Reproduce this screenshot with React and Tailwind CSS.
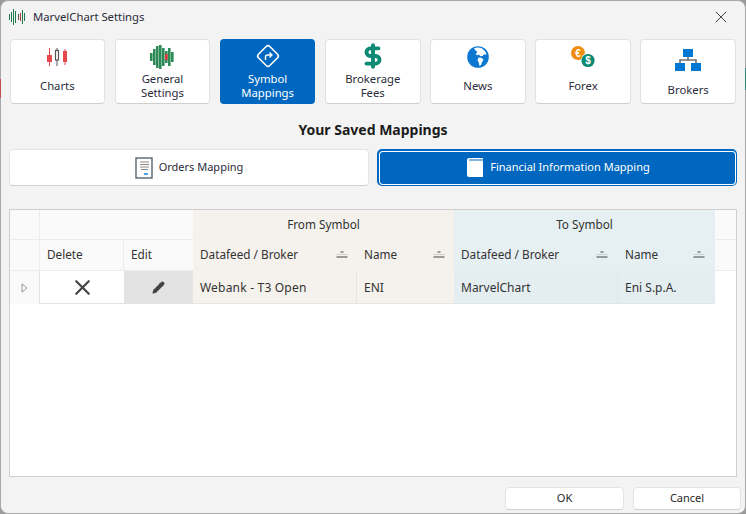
import { X, Pencil, DollarSign } from "lucide-react";

function ChartsIcon() {
  return (
    <svg width="20" height="18" viewBox="0 0 20 18">
      <path d="M2.500 0v18M18 1v16" stroke="#e5484d" strokeWidth="1" />
      <rect x="0" y="7" width="5" height="7" fill="#e5484d" />
      <rect x="16" y="3" width="4" height="11" fill="#e5484d" />
      <path d="M10 0v18" stroke="#555" strokeWidth="1" />
      <rect x="8.500" y="2.500" width="3" height="9.500" fill="#fff" stroke="#555" strokeWidth="1.2" />
    </svg>
  );
}

function WaveIcon() {
  const bars = [[0, 8, 8], [3, 4, 16], [6, 1, 22], [9, 0, 24], [12, 3, 18], [15, 6, 12], [18, 3, 18], [21, 7, 10]];
  return (
    <svg width="24" height="24" viewBox="0 0 24 24">
      {bars.map(([x, y, h]) => (
        <rect key={x} x={x} y={y} width="2.6" height={h} fill="#2e8b57" />
      ))}
      <rect x="15" y="9" width="2.6" height="6" fill="#d9363e" />
    </svg>
  );
}

function LogoIcon() {
  const bars = [[0, 5, 6, "#1e7a4c"], [2, 3, 10, "#1e7a4c"], [4, 0, 16, "#1e7a4c"], [6, 2, 12, "#1e7a4c"], [9, 5, 6, "#555"], [11, 4, 8, "#b03a3a"], [13, 1, 14, "#1e7a4c"], [15, 4, 8, "#1e7a4c"]];
  return (
    <svg width="16" height="16" viewBox="0 0 16 16">
      {bars.map(([x, y, h, c]) => (
        <rect key={x} x={x} y={y} width="1" height={h} fill={c} />
      ))}
    </svg>
  );
}

function MappingIcon() {
  return (
    <svg width="26" height="26" viewBox="0 0 26 26" fill="none" stroke="#fff">
      <rect x="5" y="5" width="16" height="16" rx="2.5" transform="rotate(45 13 13)" strokeWidth="1.6" />
      <path d="M10.500 17v-3a2 2 0 0 1 2-2h4M14.500 9.500l2.500 2.500-2.500 2.500" strokeWidth="1.4" />
    </svg>
  );
}

function GlobeIcon() {
  return (
    <svg width="22" height="22" viewBox="0 0 22 22">
      <circle cx="11" cy="11" r="10.8" fill="#0c78d2" />
      <path d="M7 2.200c3-1 6-.8 8.500.5l3 3 1 3-2.500-.5-1.500 1.800-2 .2-1.500-1.500-2.500.5-.5-2 1.500-1.500L8.500 4.500zM11.500 11.500l3.500.5 1.500 2-1.500 2-1 3-1.500 1-.8-3.500-1.200-2.500z" fill="#fff" />
    </svg>
  );
}

function ForexIcon() {
  return (
    <svg width="24" height="22" viewBox="0 0 24 22">
      <circle cx="7" cy="7" r="7" fill="#f28c0f" />
      <text x="7" y="10.500" textAnchor="middle" fontSize="10" fontWeight="700" fill="#fff" fontFamily="Liberation Sans, sans-serif">€</text>
      <circle cx="17" cy="14" r="7" fill="#fff" />
      <circle cx="17" cy="14.500" r="6.600" fill="#0c8a73" />
      <text x="17" y="18" textAnchor="middle" fontSize="10" fontWeight="700" fill="#fff" fontFamily="Liberation Sans, sans-serif">$</text>
    </svg>
  );
}

function BrokersIcon() {
  return (
    <svg width="26" height="22" viewBox="0 0 26 22">
      <path d="M13 8v3M5 14v-3h16v3" stroke="#707070" strokeWidth="1.6" fill="none" />
      <rect x="8" y="0" width="10" height="8" fill="#0078d4" />
      <rect x="0" y="14" width="10" height="8" fill="#0078d4" />
      <rect x="16" y="14" width="10" height="8" fill="#0078d4" />
    </svg>
  );
}

function OrdersIcon() {
  return (
    <svg width="18" height="22" viewBox="0 0 18 22" fill="none">
      <rect x="1" y="1" width="16" height="20" fill="#fff" stroke="#5b6670" strokeWidth="1.4" />
      <path d="M5 5h9M5 7.500h9M5 10h9M6 12.500h7" stroke="#8a8a8a" />
      <path d="M9 17h4" stroke="#0c78d2" strokeWidth="1.4" />
    </svg>
  );
}

function BookIcon() {
  return (
    <svg width="16" height="19" viewBox="0 0 16 19">
      <path d="M2 0h14v1.400H2.500c-.8 0-.8 1.200 0 1.200H16V19H2a2 2 0 0 1-2-2V2a2 2 0 0 1 2-2z" fill="#fff" />
    </svg>
  );
}

function SortMark() {
  return (
    <svg width="12" height="7" viewBox="0 0 12 7" fill="none" className="shrink-0">
      <path d="M4.500 1h3" stroke="#444" strokeWidth="1" />
      <path d="M0.500 3.500h11" stroke="#bbb" strokeWidth="0.6" />
      <path d="M0.500 6h11" stroke="#444" strokeWidth="1" />
    </svg>
  );
}

const tabs = [
  { label: "Charts", icon: <ChartsIcon />, top: "pt-[8px]", gap: "mt-[13px]" },
  { label: ["General", "Settings"], icon: <WaveIcon />, top: "pt-[5px]", gap: "mt-[3px]" },
  { label: ["Symbol", "Mappings"], icon: <MappingIcon />, active: true, top: "pt-[4px]", gap: "mt-[3px]" },
  { label: ["Brokerage", "Fees"], icon: <DollarSign size={26} strokeWidth={3.6} className="text-[#0c8a73]" />, top: "pt-[3px]", gap: "mt-[3px]" },
  { label: "News", icon: <GlobeIcon />, top: "pt-[6px]", gap: "mt-[11px]" },
  { label: "Forex", icon: <ForexIcon />, top: "pt-[6px]", gap: "mt-[11px]" },
  { label: "Brokers", icon: <BrokersIcon />, top: "pt-[9px]", gap: "mt-[12px]" },
];

export default function App() {
  return (
    <div className="relative w-[746px] h-[514px] overflow-hidden bg-[#9a9a9a] font-['Noto_Sans',sans-serif] text-[12px] text-[#1f1f1f]">
      <div className="h-full flex flex-col border border-[#a8a8a8] rounded-lg bg-[#f3f3f3]">
        {/* title bar */}
        <div className="h-[32px] shrink-0 flex items-center pl-[8px] pr-[14px]">
          <LogoIcon />
          <span className="ml-[8px] text-[11.3px] text-[#2b2b3a]">MarvelChart Settings</span>
          <X className="ml-auto text-[#333]" size={20} strokeWidth={1.1} />
        </div>

        {/* tabs */}
        <div className="mt-[6px] ml-[8.5px] mr-[9px] grid grid-cols-7 gap-[9.5px]">
          {tabs.map((t) => {
            const lines = Array.isArray(t.label) ? t.label : [t.label];
            return (
              <div
                key={lines[0]}
                className={`h-[65px] rounded-[4px] flex flex-col items-center text-[11.3px] ${t.top} ${
                  t.active ? "bg-[#0067c0] text-white" : "bg-white border border-[#e2e2e2] border-b-[#cfcfcf] text-[#2b2b3a]"
                }`}
              >
                <div className="flex items-center justify-center">{t.icon}</div>
                <div className={`${t.gap} text-center leading-[14px]`}>
                  {lines.map((l) => (
                    <div key={l}>{l}</div>
                  ))}
                </div>
              </div>
            );
          })}
        </div>

        <div className="mt-[16px] text-center text-[14px] leading-[20px] font-bold text-[#1c1c1c]">Your Saved Mappings</div>

        {/* toggle */}
        <div className="mt-[9px] ml-[8px] mr-[8px] flex items-center gap-[8px] text-[11px]">
          <div className="w-[360px] h-[37px] flex items-center justify-center gap-[6px] rounded-[4px] bg-white border border-[#e4e4e4] border-b-[#cfcfcf]">
            <OrdersIcon />
            <span className="text-[#2b2b3a]">Orders Mapping</span>
          </div>
          <div className="flex-1 h-[37px] p-[1.5px] rounded-[5px] bg-[#0067c0]">
            <div className="h-full p-[1px] rounded-[4px] bg-white">
              <div className="h-full pl-[3px] flex items-center justify-center gap-[7px] rounded-[3px] bg-[#0067c0] text-white">
                <BookIcon />
                <span>Financial Information Mapping</span>
              </div>
            </div>
          </div>
        </div>

        {/* grid */}
        <div className="mt-[23px] ml-[8px] mr-[8px] h-[268px] flex flex-col border border-[#cfcfcf] bg-white text-[11.75px] text-[#333]">
          <div className="grid grid-cols-[30px_84px_69px_164px_97px_164px_97px_1fr] grid-rows-[30px_31px_33px]">
            {/* band row */}
            <div className="bg-[#fafafa] border-r border-b border-[#ececec]" />
            <div className="col-span-2 bg-[#fafafa] border-b border-[#ececec]" />
            <div className="col-span-2 bg-[#f5f1ec] flex items-center justify-center">From Symbol</div>
            <div className="col-span-2 bg-[#e6eff1] flex items-center justify-center">To Symbol</div>
            <div className="bg-[#fafafa] border-b border-[#ececec]" />

            {/* column headers */}
            <div className="bg-[#fafafa] border-r border-b border-[#ececec]" />
            <div className="bg-[#fafafa] border-r border-b border-[#ececec] flex items-center pb-[1px] pl-[7px]">Delete</div>
            <div className="bg-[#fafafa] border-b border-[#ececec] flex items-center pb-[1px] pl-[7px]">Edit</div>
            <div className="bg-[#f5f1ec] flex items-center justify-between pb-[2px] pl-[7px] pr-[9px]">
              Datafeed / Broker <SortMark />
            </div>
            <div className="bg-[#f5f1ec] flex items-center justify-between pb-[2px] pl-[7px] pr-[9px]">
              Name <SortMark />
            </div>
            <div className="bg-[#e6eff1] flex items-center justify-between pb-[2px] pl-[7px] pr-[10px]">
              Datafeed / Broker <SortMark />
            </div>
            <div className="bg-[#e6eff1] flex items-center justify-between pb-[2px] pl-[7px] pr-[10px]">
              Name <SortMark />
            </div>
            <div className="bg-[#fafafa] border-b border-[#ececec]" />

            {/* data row */}
            <div className="bg-[#fafafa] flex items-center justify-center border-r border-[#e2e2e2]">
              <svg width="7" height="10" viewBox="0 0 7 10" fill="none">
                <path d="M1 1l5 4-5 4z" stroke="#8a8a8a" strokeWidth="0.9" />
              </svg>
            </div>
            <div className="flex items-center justify-center border-b border-[#e2e2e2]">
              <X size={25} strokeWidth={2.1} className="text-[#444]" />
            </div>
            <div className="bg-[#e3e3e3] flex items-center justify-center border-b border-[#e2e2e2]">
              <Pencil size={13} className="text-[#444] fill-[#444]" />
            </div>
            <div className="bg-[#f5f1ec] border-r border-b border-[#e8e4de] flex items-center pt-[1px] pl-[7px] text-[12px] tracking-[0.2px]">Webank - T3 Open</div>
            <div className="bg-[#f5f1ec] border-b border-[#e8e4de] flex items-center pt-[1px] pl-[7px] text-[12px]">ENI</div>
            <div className="bg-[#e4eef0] border-r border-b border-[#dde7e9] flex items-center pt-[1px] pl-[7px] text-[12px]">MarvelChart</div>
            <div className="bg-[#e4eef0] border-b border-[#dde7e9] flex items-center pt-[1px] pl-[7px] text-[12px]">Eni S.p.A.</div>
            <div />
          </div>
        </div>

        {/* footer */}
        <div className="mt-[10px] ml-[504px] flex gap-[9px] text-[11px]">
          <div className="w-[119px] h-[23px] rounded-[4px] bg-white border border-[#e4e4e4] border-b-[#cfcfcf] flex items-center justify-center">OK</div>
          <div className="w-[108px] h-[23px] rounded-[4px] bg-white border border-[#e4e4e4] border-b-[#cfcfcf] flex items-center justify-center">Cancel</div>
        </div>
      </div>
      {/* slivers of the desktop behind the window */}
      <div className="absolute left-0 top-[79px] w-[1px] h-[19px] bg-[#c0504d]" />
      <div className="absolute right-0 top-[68px] w-[1px] h-[22px] bg-[#2e8b7a]" />
    </div>
  );
}
